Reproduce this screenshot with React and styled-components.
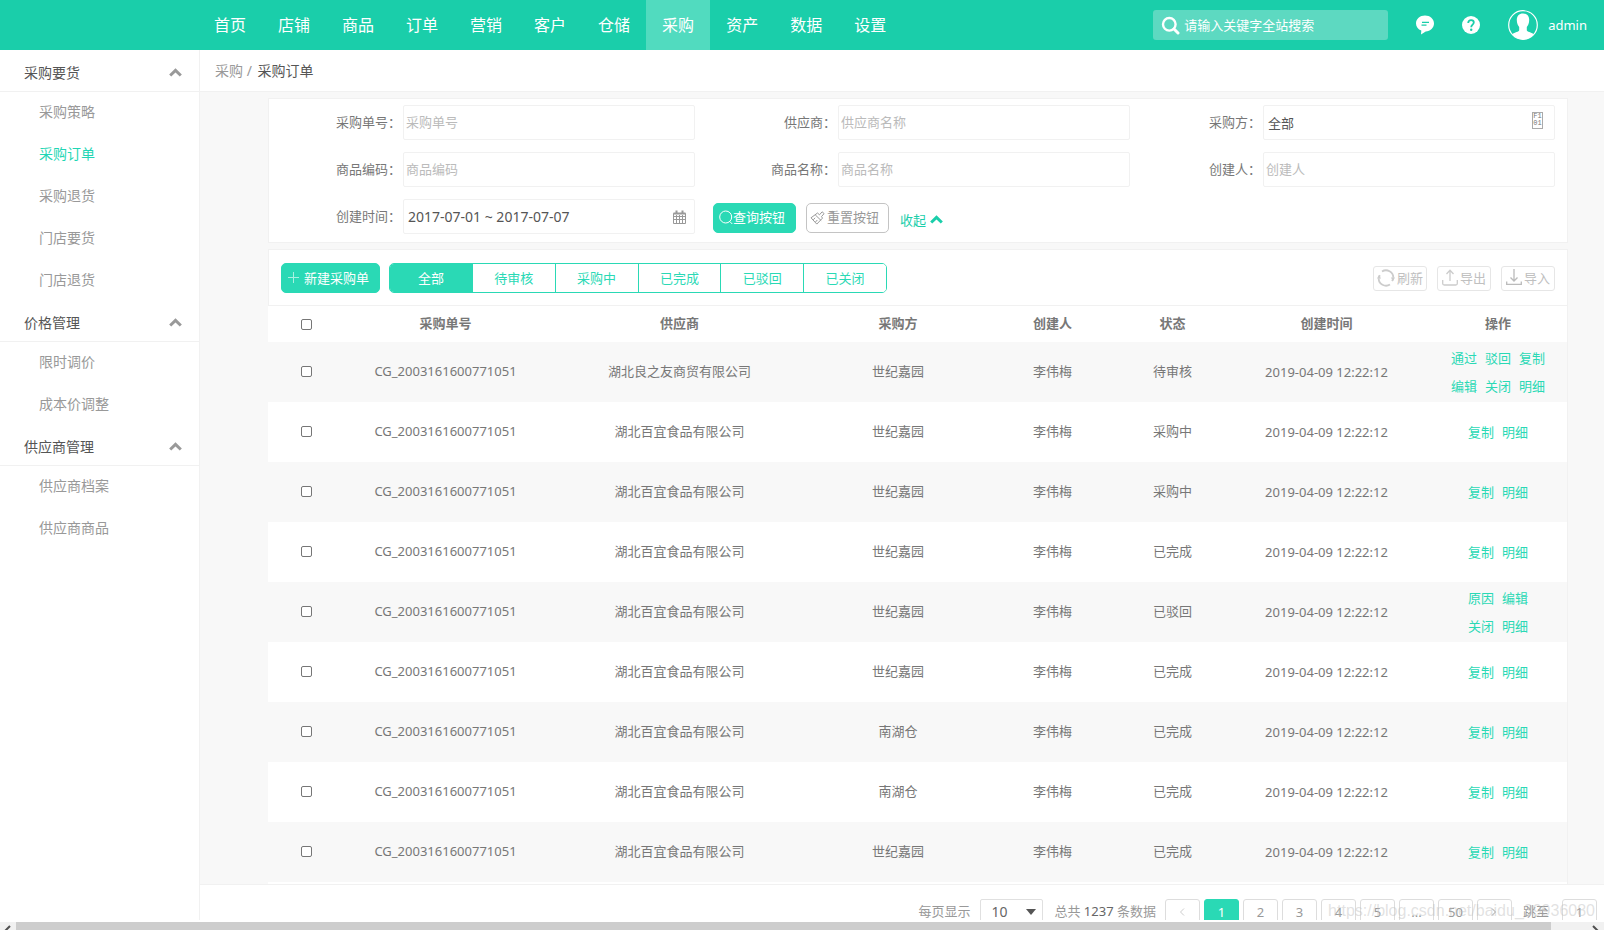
import React, { useState } from 'react';
import styled, { createGlobalStyle } from 'styled-components';

const GlobalStyle = createGlobalStyle`
  * {
    box-sizing: border-box;
  }
  body {
    margin: 0;
    overflow: hidden;
    background: #fff;
    color: #777;
    font-family: "Noto Sans", "Noto Sans CJK SC", sans-serif;
    font-size: 13px;
    line-height: 20px;
  }
  a {
    color: inherit;
    text-decoration: none;
  }
  button, input, select {
    font: inherit;
    color: inherit;
    margin: 0;
  }
  button {
    cursor: pointer;
  }
  svg {
    display: block;
    flex: none;
  }
`;

const Page = styled.div`
  display: flex;
  flex-direction: column;
  height: 100vh;
`;

const TopBar = styled.header`
  display: flex;
  align-items: center;
  flex: none;
  height: 50px;
  padding: 0 17px 0 198px;
  background: #1aceaa;
  color: #fff;
`;

const TopNav = styled.nav`
  display: flex;
  flex: 1;
`;

const TopLink = styled.a`
  padding: 0 16px;
  font-size: 16px;
  line-height: 50px;
  background: ${(props) => (props.$active ? '#51dbbf' : 'transparent')};
`;

const GlobalSearch = styled.label`
  display: flex;
  align-items: center;
  width: 235px;
  height: 30px;
  padding: 0 8px;
  border-radius: 3px;
  background: #5dd9c1;

  input {
    flex: 1;
    min-width: 0;
    margin-left: 4px;
    padding: 0;
    border: 0;
    outline: 0;
    background: none;
  }
  input::placeholder {
    color: #fff;
    opacity: 1;
  }
`;

const IconLink = styled.button`
  margin-left: 28px;
  padding: 0;
  border: 0;
  background: none;
`;

const User = styled.a`
  display: flex;
  align-items: center;
  gap: 10px;
  margin-left: 28px;
`;

const Body = styled.div`
  display: flex;
  flex: 1;
  min-height: 0;
  margin-bottom: 2px;
`;

const Sidebar = styled.aside`
  flex: none;
  width: 200px;
  padding-top: 2px;
  border-right: 1px solid #f1f1f1;
  font-size: 14px;
`;

const GroupTitle = styled.button`
  display: flex;
  align-items: center;
  justify-content: space-between;
  width: 100%;
  height: 40px;
  padding: 2px 17px 0 24px;
  border: 0;
  border-bottom: 1px solid #f1f1f1;
  background: none;
  color: #555;
`;

const SideLink = styled.a`
  display: block;
  height: 42px;
  padding-left: 39px;
  line-height: 40px;
  color: ${(props) => (props.$active ? '#1fd6b4' : '#999')};
`;

const Main = styled.main`
  display: flex;
  flex: 1;
  flex-direction: column;
  min-width: 0;
  background: #f8f8f8;
`;

const Breadcrumb = styled.div`
  flex: none;
  height: 42px;
  padding-left: 15px;
  border-bottom: 1px solid #f1f1f1;
  background: #fff;
  color: #999;
  font-size: 14px;
  line-height: 42px;

  strong {
    margin-left: 2px;
    color: #555;
    font-weight: 400;
  }
`;

const Content = styled.div`
  flex: 1;
  min-height: 0;
  padding: 6px 36px 0 68px;
  overflow: hidden;
`;

const Filters = styled.form`
  display: grid;
  grid-template-columns: 426fr 435fr 425fr;
  row-gap: 12px;
  margin-bottom: 6px;
  padding: 6px 12px 8px 0;
  border: 1px solid #f1f1f1;
  background: #fff;
`;

const Field = styled.div`
  display: flex;
  align-items: center;
  justify-content: flex-end;

  label {
    margin-right: 2px;
    padding-bottom: 2px;
    white-space: nowrap;
  }
`;

const TextInput = styled.input`
  width: 292px;
  height: 35px;
  padding: 0 2px 2px;
  border: 1px solid #f1f1f1;
  border-radius: 2px;
  outline: 0;
  background: #fff;

  &::placeholder {
    color: #bbb;
    opacity: 1;
  }
`;

const BoxedControl = styled.div`
  display: flex;
  align-items: center;
  width: 292px;
  height: 35px;
  padding: 0 ${(props) => props.$end || 8}px 0 4px;
  border: 1px solid #f1f1f1;
  border-radius: 2px;
  color: #555;

  input, select {
    flex: 1;
    min-width: 0;
    padding: 0;
    border: 0;
    outline: 0;
    background: none;
    appearance: none;
  }
  input {
    font-size: 14px;
  }
`;

const GlyphBox = styled.span`
  width: 11px;
  height: 17px;
  margin-bottom: 4px;
  border: 1px solid #aaa;
  color: #777;
  font: 7px/7px "Liberation Mono", monospace;
  text-align: center;
`;

const FilterActions = styled.div`
  display: flex;
  align-items: center;
  grid-column: 2 / 4;
  padding: 2px 0 0 18px;
`;

const Button = styled.button`
  display: flex;
  align-items: center;
  height: 30px;
  padding: 0 10px 1px 5px;
  border: 1px solid ${(props) => (props.$primary ? '#2ad9b5' : '#c4c4c4')};
  border-radius: 5px;
  background: ${(props) => (props.$primary ? '#2ad9b5' : '#fff')};
  color: ${(props) => (props.$primary ? '#fff' : '#999')};
  white-space: nowrap;
`;

const ResetButton = styled(Button)`
  gap: 2px;
  margin-left: 10px;
  padding: 0 9px 1px 3px;
`;

const CreateButton = styled(Button)`
  gap: 4px;
`;

const Collapse = styled.button`
  display: flex;
  align-items: center;
  gap: 4px;
  margin: 4px 0 0 11px;
  padding: 0;
  border: 0;
  background: none;
  color: #1aceaa;
`;

const ListPanel = styled.section`
  padding-bottom: 8px;
  border: 1px solid #f1f1f1;
  border-left: 0;
  background: #fff;
`;

const Toolbar = styled.div`
  display: flex;
  align-items: center;
  justify-content: space-between;
  height: 56px;
  padding: 1px 12px 0;
  border-bottom: 1px solid #f1f1f1;
  border-left: 1px solid #f1f1f1;
`;

const ToolGroup = styled.div`
  display: flex;
  align-items: center;
  gap: ${(props) => props.$gap}px;
`;

const Tabs = styled.div`
  display: flex;
  width: 498px;
  height: 30px;
  overflow: hidden;
  border: 1px solid #2ad9b5;
  border-radius: 5px;
`;

const Tab = styled.button`
  flex: 1;
  padding: 0 0 1px;
  border: 0;
  background: ${(props) => (props.$active ? '#2ad9b5' : '#fff')};
  color: ${(props) => (props.$active ? '#fff' : '#2ad9b5')};

  & + & {
    border-left: 1px solid #2ad9b5;
  }
`;

const GhostButton = styled.button`
  display: flex;
  align-items: center;
  justify-content: center;
  gap: 2px;
  width: 54px;
  height: 25px;
  padding: 0 0 1px;
  border: 1px solid #e6e6e6;
  border-radius: 3px;
  background: #fff;
  color: #c0c0c0;
`;

const Table = styled.table`
  width: 100%;
  border-collapse: collapse;
  table-layout: fixed;
  text-align: center;

  th {
    height: 36px;
    padding: 0 0 2px;
    font-weight: 700;
  }
  td {
    height: 60px;
    padding: 0 0 2px;
  }
  th:first-child, td:nth-last-child(-n + 2) {
    padding: 0;
  }
  tbody tr:nth-child(odd) {
    background: #f8f8f8;
  }
`;

const Check = styled.input`
  display: block;
  width: 11px;
  height: 11px;
  margin: 0 auto;
  border: 1px solid #767676;
  border-radius: 2px;
  background: #fff;
  appearance: none;

  &:checked {
    background: #2ad9b5;
  }
`;

const OpLine = styled.div`
  display: flex;
  justify-content: center;
  gap: 8px;
  color: #2ad9b5;
  line-height: 28px;
`;

const Footer = styled.footer`
  display: flex;
  flex: none;
  align-items: flex-start;
  justify-content: flex-end;
  height: 36px;
  padding: 14px 7px 0 0;
  overflow: hidden;
  border-top: 1px solid #f1f1f1;
  background: #fff;
  color: #999;
  line-height: 24px;
  white-space: nowrap;

  b {
    color: #666;
    font-weight: 400;
  }
`;

const PageSize = styled.div`
  display: flex;
  align-items: center;
  width: 63px;
  height: 26px;
  margin: 0 11px 0 10px;
  padding: 0 6px 0 10px;
  border: 1px solid #e0e0e0;
  border-radius: 2px;
  color: #666;

  select {
    flex: 1;
    min-width: 0;
    padding: 0;
    border: 0;
    background: none;
    font-size: 14px;
    line-height: 24px;
    appearance: none;
  }
`;

const Pages = styled.nav`
  display: flex;
  gap: 4px;
  margin: 0 11px 0 9px;
`;

const PageButton = styled.button`
  width: 35px;
  height: 26px;
  padding: 0;
  border: 1px solid ${(props) => (props.$active ? '#2ad9b5' : '#ddd')};
  border-radius: 3px;
  background: ${(props) => (props.$active ? '#2ad9b5' : '#fff')};
  color: ${(props) => (props.$active ? '#fff' : '#999')};
  line-height: 24px;

  svg {
    margin: 0 auto;
  }
`;

const JumpInput = styled.input`
  width: 35px;
  height: 26px;
  margin-left: 13px;
  padding: 0;
  border: 1px solid #ddd;
  border-radius: 3px;
  text-align: center;
`;

const Watermark = styled.span`
  position: absolute;
  right: 9px;
  bottom: 9px;
  color: rgba(190, 190, 190, 0.45);
  font: 16px/20px "Liberation Sans", sans-serif;
  pointer-events: none;
`;

const ScrollTrack = styled.div`
  display: flex;
  flex: none;
  height: 8px;
  overflow: hidden;
  background: #f1f1f1;
`;

const ScrollThumb = styled.div`
  flex: 1;
  margin-right: 37px;
  background: #cdcdcd;
`;

const ScrollArrow = styled.button`
  width: 16px;
  height: 16px;
  padding: 0 0 0 4px;
  border: 0;
  background: none;
`;

const Chevron = ({ color = '#999' }) => (
  <svg width="13" height="9" viewBox="0 0 13 9" fill="none" stroke={color} strokeWidth="3">
    <path d="M1.2 7.5 6.5 2.4l5.3 5.1" />
  </svg>
);

const SearchIcon = () => (
  <svg width="19" height="19" viewBox="0 0 19 19" fill="none" stroke="#fff" strokeWidth="2.4">
    <circle cx="8.3" cy="8.3" r="6.3" />
    <path d="m13 13 4 4" strokeWidth="3" strokeLinecap="round" />
  </svg>
);

const ChatIcon = () => (
  <svg width="18" height="20" viewBox="0 0 18 20">
    <path fill="#fff" d="M9 .5c5 0 9 3.5 9 8 0 4.3-3.6 7.6-8.3 8L5 19.500l.3-3.900C2.100 14.300 0 11.700 0 8.500c0-4.500 4-8 9-8Z" />
    <path stroke="#1aceaa" strokeWidth="1.3" d="M6 7.300h7M5.500 10.200h5" />
  </svg>
);

const HelpIcon = () => (
  <svg width="18" height="18" viewBox="0 0 18 18" fill="none">
    <circle cx="9" cy="9" r="9" fill="#fff" />
    <path stroke="#1aceaa" strokeWidth="1.8" d="M6.200 7c0-1.800 1.200-2.900 2.900-2.900 1.600 0 2.700 1 2.700 2.400 0 2-2.600 2.200-2.600 4.700" />
    <circle cx="9.2" cy="13.7" r="1.2" fill="#1aceaa" />
  </svg>
);

const AvatarIcon = () => (
  <svg width="30" height="30" viewBox="0 0 30 30">
    <circle cx="15" cy="15" r="14.3" fill="none" stroke="#fff" strokeWidth="1.2" />
    <path fill="#fff" d="M15 3.500c4 0 6.200 2.600 6.200 6.600 0 3.400-1.200 5.300-2.400 7v3.200c0 1.500 4.600 2 7 4A14.300 14.300 0 0 1 15 29.500 14.300 14.300 0 0 1 4.200 24.300c2.400-2 7-2.500 7-4v-3.200c-1.200-1.700-2.400-3.600-2.400-7 0-4 2.200-6.600 6.200-6.600Z" />
  </svg>
);

const CalendarIcon = () => (
  <svg width="13" height="14" viewBox="0 0 13 14" fill="none" stroke="#999">
    <path d="M.5 3.500h12v10H.5zM.5 6.500h12M.5 9.500h12M3.500 5v8M6.500 5v8M9.500 5v8" />
    <path strokeWidth="2" d="M.5 3.500h12M3.500.5v3M9.500.5v3" />
  </svg>
);

const QueryIcon = () => (
  <svg width="14" height="15" viewBox="0 0 14 15" fill="none" stroke="#fff">
    <circle cx="6.7" cy="7" r="6" />
    <path d="m10.800 11.500 2.500 2.500" />
  </svg>
);

const BrushIcon = () => (
  <svg width="15" height="15" viewBox="0 0 15 15" fill="none" stroke="#999">
    <path d="m7.500 3 2 1.800 2.600-3 2 1.800-2.600 3 1 1.500-5.700 6L1 7.800zM5.200 4.800l6 5.800M3.300 9.800l1.800-2M5.500 12l1.800-2" />
  </svg>
);

const PlusIcon = () => (
  <svg width="13" height="13" viewBox="0 0 13 13" stroke="#a9f0e1">
    <path d="M6.500 1v11M1 6.500h11" />
  </svg>
);

const RefreshIcon = () => (
  <svg width="18" height="18" viewBox="0 0 18 18" fill="none" stroke="#ccc" strokeWidth="1.8">
    <path d="M5 2.500a7.300 7.300 0 0 1 11.300 6.300M13 15.500A7.300 7.300 0 0 1 1.700 9.200" />
    <path d="M3 6.200a7.300 7.300 0 0 0-1.300 3M15 12a7.300 7.300 0 0 0 1.300-3" />
    <path fill="#ccc" stroke="none" d="m0 9.500 1.900-3.500 2.200 3.500zM13.800 8.500H18L16 12z" />
  </svg>
);

const ExportIcon = () => (
  <svg width="16" height="17" viewBox="0 0 16 17" fill="none" stroke="#ccc" strokeWidth="1.3">
    <path d="M8 12V1.500M4.500 5 8 1.300 11.500 5M.7 11v3.500q0 1.500 1.500 1.500h11.600q1.500 0 1.500-1.500V11" />
  </svg>
);

const ImportIcon = () => (
  <svg width="16" height="17" viewBox="0 0 16 17" fill="none" stroke="#bbb" strokeWidth="1.3">
    <path d="M8 0v12M4.500 8.500 8 12l3.500-3.500M.7 12.500v2.800h14.600v-2.800" />
  </svg>
);

const CaretDown = () => (
  <svg width="10" height="6" viewBox="0 0 10 6">
    <path fill="#555" d="M0 0h10L5 6z" />
  </svg>
);

const PageArrow = ({ next }) => (
  <svg width="6" height="8" viewBox="0 0 6 8" fill="none" stroke={next ? '#999' : '#ccc'}>
    <path d={next ? 'M1 .5 4.500 4 1 7.500' : 'M5 .5 1.500 4 5 7.500'} />
  </svg>
);

const ThumbArrow = ({ right }) => (
  <svg width="7" height="10" viewBox="0 0 7 10" fill="none" stroke="#505050" strokeWidth="2">
    <path d={right ? 'M1 1l4 4-4 4' : 'M6 1 2 5l4 4'} />
  </svg>
);

const modules = ['首页', '店铺', '商品', '订单', '营销', '客户', '仓储', '采购', '资产', '数据', '设置'];

const menu = [
  { title: '采购要货', items: ['采购策略', '采购订单', '采购退货', '门店要货', '门店退货'] },
  { title: '价格管理', items: ['限时调价', '成本价调整'] },
  { title: '供应商管理', items: ['供应商档案', '供应商商品'] },
];

const statusTabs = ['全部', '待审核', '采购中', '已完成', '已驳回', '已关闭'];

const columns = [
  { title: '采购单号', width: 203 },
  { title: '供应商', width: 265 },
  { title: '采购方', width: 172 },
  { title: '创建人', width: 137 },
  { title: '状态', width: 103 },
  { title: '创建时间', width: 205 },
  { title: '操作', width: 138 },
];

const baseOps = [['复制', '明细']];

const createOrder = (status, buyer = '世纪嘉园', ops = baseOps, supplier = '湖北百宜食品有限公司') => ({
  code: 'CG_2003161600771051',
  supplier,
  buyer,
  creator: '李伟梅',
  status,
  time: '2019-04-09 12:22:12',
  ops,
});

const orders = [
  createOrder('待审核', '世纪嘉园', [['通过', '驳回', '复制'], ['编辑', '关闭', '明细']], '湖北良之友商贸有限公司'),
  createOrder('采购中'),
  createOrder('采购中'),
  createOrder('已完成'),
  createOrder('已驳回', '世纪嘉园', [['原因', '编辑'], ['关闭', '明细']]),
  createOrder('已完成'),
  createOrder('已完成', '南湖仓'),
  createOrder('已完成', '南湖仓'),
  createOrder('已完成'),
];

const pageNumbers = ['1', '2', '3', '4', '5', '...', '50'];

const TextField = ({ id, label, placeholder = label }) => (
  <Field>
    <label htmlFor={id}>{`${label}：`}</label>
    <TextInput id={id} placeholder={placeholder} />
  </Field>
);

const SideMenu = () => (
  <Sidebar>
    {menu.map((group) => (
      <div key={group.title}>
        <GroupTitle type="button">
          {group.title}
          <Chevron />
        </GroupTitle>
        {group.items.map((item) => (
          <SideLink key={item} href="#" $active={item === '采购订单'}>{item}</SideLink>
        ))}
      </div>
    ))}
  </Sidebar>
);

const FilterPanel = () => (
  <Filters onSubmit={(e) => e.preventDefault()}>
    <TextField id="code" label="采购单号" />
    <TextField id="supplier" label="供应商" placeholder="供应商名称" />
    <Field>
      <label htmlFor="buyer">采购方：</label>
      <BoxedControl $end={11}>
        <select id="buyer">
          <option>全部</option>
        </select>
        <GlyphBox aria-hidden="true">F1 01</GlyphBox>
      </BoxedControl>
    </Field>
    <TextField id="goods-code" label="商品编码" />
    <TextField id="goods-name" label="商品名称" />
    <TextField id="creator" label="创建人" />
    <Field>
      <label htmlFor="created">创建时间：</label>
      <BoxedControl>
        <input id="created" defaultValue="2017-07-01 ~ 2017-07-07" />
        <CalendarIcon />
      </BoxedControl>
    </Field>
    <FilterActions>
      <Button type="submit" $primary>
        <QueryIcon />
        查询按钮
      </Button>
      <ResetButton type="reset">
        <BrushIcon />
        重置按钮
      </ResetButton>
      <Collapse type="button">
        收起
        <Chevron color="#1aceaa" />
      </Collapse>
    </FilterActions>
  </Filters>
);

const OrderTable = () => (
  <Table>
    <colgroup>
      <col width="76" />
      {columns.map((col) => <col key={col.title} width={col.width} />)}
    </colgroup>
    <thead>
      <tr>
        <th><Check type="checkbox" aria-label="全选" /></th>
        {columns.map((col) => <th key={col.title}>{col.title}</th>)}
      </tr>
    </thead>
    <tbody>
      {orders.map((order, index) => (
        <tr key={index}>
          <td><Check type="checkbox" aria-label={order.code} /></td>
          <td>{order.code}</td>
          <td>{order.supplier}</td>
          <td>{order.buyer}</td>
          <td>{order.creator}</td>
          <td>{order.status}</td>
          <td>{order.time}</td>
          <td>
            {order.ops.map((line) => (
              <OpLine key={line[0]}>
                {line.map((op) => <a key={op} href="#">{op}</a>)}
              </OpLine>
            ))}
          </td>
        </tr>
      ))}
    </tbody>
  </Table>
);

const Pagination = () => (
  <Footer>
    <label htmlFor="page-size">每页显示</label>
    <PageSize>
      <select id="page-size">
        <option>10</option>
      </select>
      <CaretDown />
    </PageSize>
    <span>
      总共 <b>1237</b> 条数据
    </span>
    <Pages>
      <PageButton aria-label="上一页"><PageArrow /></PageButton>
      {pageNumbers.map((page) => (
        <PageButton key={page} $active={page === '1'}>{page}</PageButton>
      ))}
      <PageButton aria-label="下一页"><PageArrow next /></PageButton>
    </Pages>
    <label htmlFor="jump">跳至</label>
    <JumpInput id="jump" defaultValue="1" />
  </Footer>
);

export default function App() {
  const [tab, setTab] = useState('全部');

  return (
    <Page>
      <GlobalStyle />
      <TopBar>
        <TopNav>
          {modules.map((name) => (
            <TopLink key={name} href="#" $active={name === '采购'}>{name}</TopLink>
          ))}
        </TopNav>
        <GlobalSearch>
          <SearchIcon />
          <input aria-label="全站搜索" placeholder="请输入关键字全站搜索" />
        </GlobalSearch>
        <IconLink type="button" aria-label="消息"><ChatIcon /></IconLink>
        <IconLink type="button" aria-label="帮助"><HelpIcon /></IconLink>
        <User href="#">
          <AvatarIcon />
          admin
        </User>
      </TopBar>
      <Body>
        <SideMenu />
        <Main>
          <Breadcrumb>
            <a href="#">采购</a> / <strong>采购订单</strong>
          </Breadcrumb>
          <Content>
            <FilterPanel />
            <ListPanel>
              <Toolbar>
                <ToolGroup $gap={9}>
                  <CreateButton type="button" $primary>
                    <PlusIcon />
                    新建采购单
                  </CreateButton>
                  <Tabs>
                    {statusTabs.map((name) => (
                      <Tab key={name} type="button" $active={name === tab} onClick={() => setTab(name)}>{name}</Tab>
                    ))}
                  </Tabs>
                </ToolGroup>
                <ToolGroup $gap={10}>
                  <GhostButton type="button">
                    <RefreshIcon />
                    刷新
                  </GhostButton>
                  <GhostButton type="button">
                    <ExportIcon />
                    导出
                  </GhostButton>
                  <GhostButton type="button">
                    <ImportIcon />
                    导入
                  </GhostButton>
                </ToolGroup>
              </Toolbar>
              <OrderTable />
            </ListPanel>
          </Content>
          <Pagination />
        </Main>
      </Body>
      <ScrollTrack>
        <ScrollArrow type="button" aria-label="向左滚动"><ThumbArrow /></ScrollArrow>
        <ScrollThumb />
        <ScrollArrow type="button" aria-label="向右滚动"><ThumbArrow right /></ScrollArrow>
      </ScrollTrack>
      <Watermark>https://blog.csdn.net/baidu_39936080</Watermark>
    </Page>
  );
}
